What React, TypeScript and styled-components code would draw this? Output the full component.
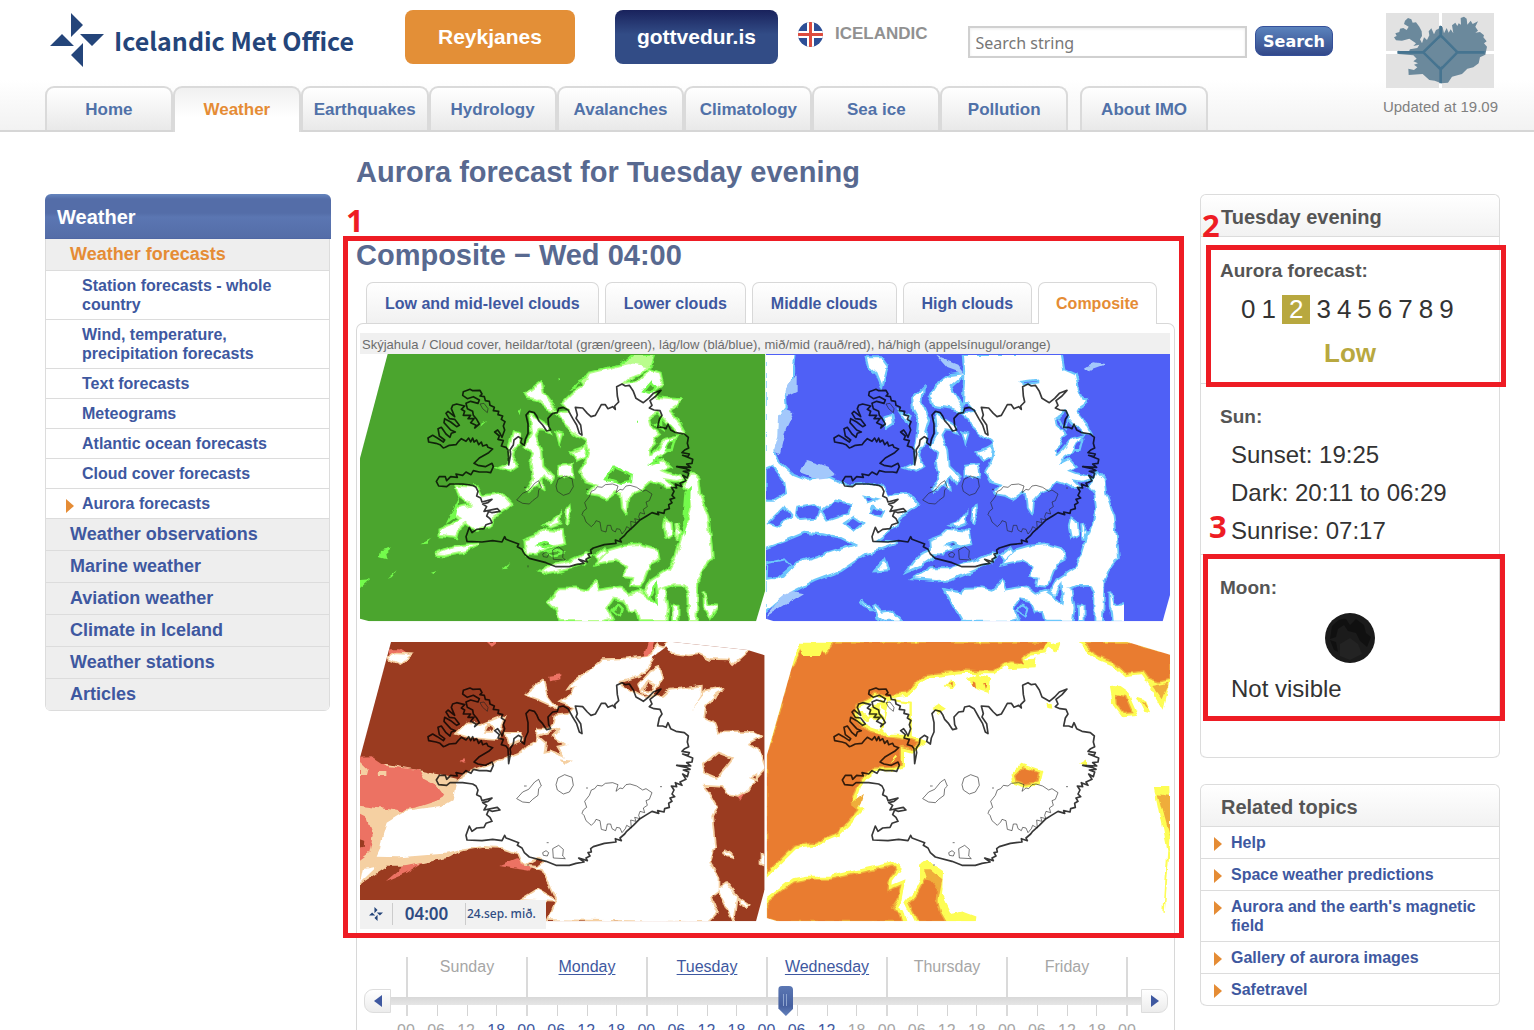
import React, { useState } from "react";
import styled, { createGlobalStyle, css } from "styled-components";

const sans = `"Liberation Sans", Arial, sans-serif`;
const line = "#dcdcdc";
const blue = "#3e58a0";
const orange = "#e58c35";
const red = "#ee1c24";

const GlobalStyle = createGlobalStyle`
  html { scrollbar-width: none; }
  body { margin: 0; background: #fff; font-family: ${sans}; color: #333; }
  *, *::before, *::after { box-sizing: border-box; }
  h1, h2, h3, p, ul, ol, dl, dd { margin: 0; padding: 0; }
  ul, ol { list-style: none; }
  a { color: inherit; text-decoration: none; }
  button { font-family: inherit; border: 0; padding: 0; cursor: pointer; }
`;

/* ---------- header ---------- */

const Header = styled.header`
  display: flex;
  justify-content: space-between;
  height: 132px;
  padding: 0 36px 0 45px;
  border-bottom: 2px solid #d6d6d6;
  background: linear-gradient(#fff 80px, #f2f2f2);
`;

const HeaderMain = styled.div`
  display: flex;
  flex-direction: column;
  flex: 0 1 1288px;
`;

const TopBar = styled.div`
  display: flex;
  flex-shrink: 0;
  align-items: flex-start;
  height: 86px;
  padding: 10px 0 0 5px;
`;

const Logo = styled.a`
  display: flex;
  align-items: center;
  gap: 10px;
  width: 300px;
  height: 60px;
  margin-right: 55px;
  white-space: nowrap;
  font: bold 25px/60px "Noto Sans CJK JP", "Open Sans", sans-serif;
  color: #24457a;
  svg { flex-shrink: 0; }
`;

const PromoLink = styled.a<{ $tone: "orange" | "navy" }>`
  display: grid;
  place-items: center;
  height: 54px;
  padding: 0 ${(p) => (p.$tone === "orange" ? 33 : 22)}px;
  margin-right: ${(p) => (p.$tone === "orange" ? 40 : 20)}px;
  border-radius: 8px;
  font-size: 21px;
  font-weight: bold;
  color: #fff;
  background: ${(p) => (p.$tone === "orange" ? "#e38f37" : "linear-gradient(#19225c, #324c86 45%)")};
`;

const Language = styled.a`
  display: flex;
  align-items: center;
  gap: 12px;
  height: 48px;
  margin-right: 40px;
  font-size: 17px;
  font-weight: bold;
  color: #919191;
`;

const SearchForm = styled.form`
  display: flex;
  align-items: flex-start;
  gap: 8px;
  flex: 1;
  padding-top: 16px;
`;

const SearchInput = styled.input`
  flex: 1;
  min-width: 0;
  height: 32px;
  padding: 2px 6px 0;
  border: 2px solid #d0d0d0;
  box-shadow: inset 0 1px 3px #ececec;
  font: 16px "Noto Sans", sans-serif;
  color: #777;
  &::placeholder { color: #777; opacity: 1; }
`;

const SearchButton = styled.button`
  width: 78px;
  height: 30px;
  border: 1px solid #35509a;
  border-radius: 8px;
  font: bold 16px "DejaVu Sans", sans-serif;
  color: #fff;
  background: linear-gradient(#5b83bd, #33498a);
`;

const Nav = styled.nav`
  display: flex;
  width: 1163px;
  max-width: 100%;
`;

const NavTab = styled.a<{ $active?: boolean; $apart?: boolean }>`
  flex: 1 1 0;
  height: 44px;
  margin-left: ${(p) => (p.$apart ? 12 : 0)}px;
  border: 2px solid #dadada;
  border-bottom: 0;
  border-radius: 9px 9px 0 0;
  text-align: center;
  font-size: 17px;
  font-weight: bold;
  line-height: 43px;
  color: #5071a8;
  background: linear-gradient(#fff, #e9e9e9);
  & + & { border-left-width: ${(p) => (p.$apart ? 2 : 0)}px; }
  ${(p) => p.$active && css`
    height: 46px;
    margin-bottom: -2px;
    color: ${orange};
    background: linear-gradient(#f0f0f0, #fff 30px);
  `}
`;

const MapWidget = styled.a`
  display: flex;
  flex-direction: column;
  align-items: center;
  gap: 9px;
  padding-top: 13px;
  font-size: 15px;
  line-height: 20px;
  white-space: nowrap;
  color: #808080;
`;

/* ---------- page ---------- */

const Page = styled.div`
  height: 100vh;
  overflow: hidden auto;
  scrollbar-width: none;
`;

const Columns = styled.div`
  display: grid;
  grid-template-columns: 286px minmax(0, 1fr) 300px;
  gap: 25px;
  align-items: start;
  padding: 0 34px 0 45px;
`;

const SideNav = styled.nav`
  margin-top: 62px;
`;

const SideTitle = styled.h2`
  height: 45px;
  padding-left: 12px;
  border-radius: 6px 6px 0 0;
  font-size: 20px;
  line-height: 46px;
  color: #fff;
  background: linear-gradient(#6585be, #546da8 5px, #546da8 19px, #5b76b2 23px, #546da8 44px, #4a62a0 45px);
`;

const SideList = styled.ul`
  margin-right: 1px;
  border: 1px solid ${line};
  border-width: 0 1px;
  border-radius: 0 0 6px 6px;
  overflow: hidden;
`;

const SideItem = styled.li<{ $sub?: boolean; $open?: boolean }>`
  position: relative;
  border-bottom: 1px solid ${line};
  padding: ${(p) => (p.$sub ? "5px 50px 5px 36px" : "5px 12px 6px 24px")};
  font-size: ${(p) => (p.$sub ? 16 : 18)}px;
  line-height: ${(p) => (p.$sub ? 19 : 20)}px;
  font-weight: bold;
  color: ${(p) => (p.$open ? orange : blue)};
  background: ${(p) => (p.$sub ? "#fff" : "#eee")};
`;

const Marker = styled.i<{ $left: number }>`
  position: absolute;
  left: ${(p) => p.$left}px;
  top: 10px;
  border: solid transparent;
  border-width: 7px 0 7px 8px;
  border-left-color: ${orange};
`;

const Main = styled.main`
  padding-top: 22px;
`;

const Title = styled.h1`
  font-size: 29px;
  line-height: 36px;
  color: #586990;
`;

const Section = styled.section`
  position: relative;
  margin-top: 47px;
`;

const Tabs = styled.div`
  display: flex;
  gap: 6px;
  padding: 9px 10px 0;
`;

const Tab = styled.button<{ $active: boolean }>`
  height: 41px;
  padding: 2px 18px 0;
  border: 1px solid #d8d8d8;
  border-bottom: 0;
  border-radius: 7px 7px 0 0;
  white-space: nowrap;
  font-size: 16px;
  font-weight: bold;
  color: ${(p) => (p.$active ? orange : blue)};
  background: ${(p) => (p.$active ? "#fff" : "linear-gradient(#fff, #f1f1f1)")};
  ${(p) => p.$active && css`
    position: relative;
    z-index: 1;
    height: 42px;
    margin-bottom: -1px;
    padding: 1px 17px 0;
  `}
`;

const MapPanel = styled.div`
  position: relative;
  padding: 9px 4px 0 3px;
  border: 1px solid #d8d8d8;
  border-bottom: 0;
  border-radius: 7px 7px 0 0;
`;

const MapCaption = styled.p`
  height: 21px;
  padding: 2px 2px 0;
  overflow: hidden;
  white-space: nowrap;
  font-size: 13px;
  line-height: 20px;
  color: #6c6c6c;
  background: #f0f0f0;
`;

const MapSvg = styled.svg`
  display: block;
  width: 100%;
  height: auto;
`;

const MapStamp = styled.div`
  position: absolute;
  left: 3px;
  bottom: 1px;
  display: flex;
  align-items: center;
  width: 186px;
  height: 29px;
  padding-bottom: 2px;
  font-family: "Noto Sans", sans-serif;
  color: #2f4c82;
  background: #f1f1f1;
  svg { margin: 0 9px; }
`;

const StampTime = styled.time`
  width: 74px;
  padding-right: 5px;
  border: solid #ccc;
  border-width: 0 1px;
  text-align: center;
  font-size: 17px;
  font-weight: 600;
  line-height: 22px;
`;

const StampDate = styled.span`
  padding-left: 1px;
  font-size: 12px;
  font-weight: 500;
`;

/* ---------- time slider ---------- */

const TimePanel = styled.div`
  padding: 27px 6px 40px 7px;
  border: 1px solid #d8d8d8;
  border-width: 0 1px;
`;

const Timeline = styled.div`
  position: relative;
`;

const DayScale = styled.ol`
  display: grid;
  grid-template-columns: repeat(6, 1fr);
  margin: 0 40px 0 42px;
  border-right: 2px solid #dadada;
`;

const Day = styled.li<{ $on: boolean }>`
  height: 59px;
  border-left: 2px solid #dadada;
  text-align: center;
  font-size: 16px;
  line-height: 20px;
  color: ${(p) => (p.$on ? blue : "#a6a6a6")};
  a { text-decoration: underline; text-underline-offset: 2px; }
`;

const Ticks = styled.div`
  display: flex;
  justify-content: space-evenly;
  margin-top: 27px;
`;

const Tick = styled.i`
  width: 1px;
  height: 12px;
  background: #d4d4d4;
`;

const Track = styled.div`
  position: absolute;
  inset: 29px 0 auto;
  display: flex;
  align-items: center;
  height: 30px;
`;

const StepButton = styled.button<{ $side: "left" | "right" }>`
  display: grid;
  place-items: center;
  width: 27px;
  height: 24px;
  border: 1px solid #ddd;
  border-radius: ${(p) => (p.$side === "left" ? "9px 0 0 9px" : "0 9px 9px 0")};
  background: linear-gradient(#fff, #ececec);
`;

const Bar = styled.div`
  flex: 1;
  display: flex;
  align-items: center;
  height: 8px;
  padding: 0 9px;
  background: linear-gradient(#d8d8d8, #e6e6e6);
`;

const thumb = css`
  appearance: none;
  width: 15px;
  height: 30px;
  border: 0;
  border-radius: 4px 4px 0 0;
  clip-path: polygon(0 0, 100% 0, 100% 75%, 50% 100%, 0 75%);
  background:
    linear-gradient(#8ea4cf, #8ea4cf) 5px 8px / 1px 12px no-repeat,
    linear-gradient(#8ea4cf, #8ea4cf) 8px 8px / 1px 12px no-repeat,
    linear-gradient(#5b77b3, #4660a0 20px, #6482bc);
`;

const TimeRange = styled.input`
  appearance: none;
  width: 100%;
  height: 30px;
  margin: 0;
  background: none;
  &::-webkit-slider-thumb { ${thumb} }
`;

const Hours = styled.ol`
  display: grid;
  grid-template-columns: repeat(25, 1fr);
  margin: 6px 26px 0 27px;
`;

const Hour = styled.li<{ $on: boolean }>`
  text-align: center;
  font-size: 16px;
  line-height: 18px;
  color: ${(p) => (p.$on ? blue : "#a6a6a6")};
`;

/* ---------- right column ---------- */

const Aside = styled.aside`
  display: flex;
  flex-direction: column;
  gap: 26px;
  padding-top: 62px;
`;

const Card = styled.section`
  border: 1px solid ${line};
  border-bottom: 0;
  border-radius: 6px;
`;

const CardTitle = styled.h2`
  height: 42px;
  padding-left: 20px;
  border-bottom: 1px solid ${line};
  border-radius: 6px 6px 0 0;
  font-size: 20px;
  line-height: 44px;
  color: #555;
  background: linear-gradient(#fff, #f2f2f2);
`;

const Block = styled.div<{ $top: number; $bottom: number }>`
  position: relative;
  padding: ${(p) => p.$top}px 19px ${(p) => p.$bottom}px;
  border-bottom: 1px solid ${line};
  &:last-child { border-radius: 0 0 6px 6px; }
`;

const BlockTitle = styled.h3`
  font-size: 19px;
  line-height: 26px;
  color: #555;
`;

const Scale = styled.ol`
  display: flex;
  gap: 6px;
  margin: 11px 0 14px;
  padding-left: 21px;
`;

const ScaleStep = styled.li<{ $on: boolean }>`
  padding: 0 ${(p) => (p.$on ? 7 : 0)}px;
  font-size: 26px;
  line-height: 29px;
  color: ${(p) => (p.$on ? "#fff" : "#333")};
  background: ${(p) => (p.$on ? "#b8a83f" : "none")};
`;

const Level = styled.p`
  text-align: center;
  font-size: 26px;
  font-weight: bold;
  line-height: 30px;
  color: #b8a83f;
`;

const Facts = styled.ul`
  padding: 6px 0 0 11px;
  font-size: 24px;
  line-height: 38px;
  white-space: nowrap;
`;

const MoonSvg = styled.svg`
  display: block;
  margin: 11px auto 0;
`;

const TopicItem = styled.li`
  position: relative;
  padding: 6px 12px 6px 30px;
  border-bottom: 1px solid ${line};
  font-size: 16px;
  font-weight: bold;
  line-height: 19px;
  color: ${blue};
  &:last-child { border-radius: 0 0 6px 6px; }
`;

/* ---------- annotations laid over the page ---------- */

const Frame = styled.div<{ $inset: string }>`
  position: absolute;
  inset: ${(p) => p.$inset};
  z-index: 2;
  border: 5px solid ${red};
  pointer-events: none;
`;

const FrameNumber = styled.span<{ $x: number; $y: number }>`
  position: absolute;
  left: ${(p) => p.$x}px;
  top: ${(p) => p.$y}px;
  z-index: 2;
  font: bold 31px/32px "Noto Sans", sans-serif;
  color: ${red};
`;

/* ---------- drawings ---------- */

const Star = ({ size }: { size: number }) => (
  <svg width={size} height={size} viewBox="0 0 54 54" fill="#24457a" aria-hidden="true">
    <path d="M21 0L33 12 21 24z M30 21H54L42 33z M33 30V54L21 42z M0 33L12 21 24 33z" />
  </svg>
);

const Flag = () => (
  <svg width="25" height="25" viewBox="0 0 25 25" aria-hidden="true">
    <clipPath id="flag"><circle cx="12.5" cy="12.5" r="12.5" /></clipPath>
    <g clipPath="url(#flag)">
      <path fill="#2d4f97" d="M0 0h25v25H0z" />
      <path fill="#fff" d="M9 0h7v25H9z M0 9h25v7H0z" />
      <path fill="#dc4b3e" d="M11 0h3v25h-3z M0 11h25v3H0z" />
    </g>
  </svg>
);

const CountryMap = () => (
  <svg width="108" height="75" viewBox="978 39 324 225" aria-hidden="true">
    <path fill="#e2e2e2" d="M978 39h159v114H978z M1146 39h156v114h-156z M978 162h159v102H978z M1146 162h156v102h-156z" />
    <path fill="#6b899c" d="M1035 62L1044 54 1054 58 1058 68 1068 67 1078 80 1085 94 1086 108 1080 118 1086 130 1092 112 1101 120 1108 106 1106 94 1114 85 1122 103 1128 90 1136 86 1140 76 1148 82 1152 100 1160 84 1166 98 1172 88 1180 100 1176 76 1186 68 1192 78 1196 70 1203 74 1202 54 1212 50 1220 56 1222 74 1232 62 1238 72 1254 64 1246 80 1254 92 1246 98 1260 96 1272 106 1270 112 1280 124 1272 130 1281 140 1276 164 1260 172 1256 190 1240 202 1222 206 1206 222 1176 230 1164 248 1144 250 1124 242 1108 240 1088 222 1046 225 1045 206 1062 210 1072 202 1062 194 1074 190 1060 184 1070 176 1060 166 1015 162 1014 152 1046 156 1050 148 1072 144 1078 134 1060 138 1068 130 1048 116 1026 122 1008 121 1002 112 1010 108 1006 100 1018 96 1020 86 1030 84 1040 90 1046 80 1032 72z" />
    <path fill="none" stroke="#467490" strokeWidth="8" d="M1142 78V250 M1142 106L1192 157 1142 208 1090 157z M1012 157H1090 M1192 157H1274" />
    <path fill="#6b899c" d="M1142 112L1186 157 1142 202 1096 157z" />
  </svg>
);

const COAST =
  "M320 136L322 125 342 118 350 122 372 121 378 132 372 138 385 140 388 152 400 154 402 166 415 172 412 182 428 184 426 194 440 198 436 208 447 215 442 228 446 240 438 262 432 250 425 240 416 246 430 258 426 268 442 272 436 288 450 292 456 300 458 345 464 312 462 300 472 285 474 270 487 260 497 266 494 278 505 286 508 268 516 250 516 222 510 195 520 184 535 188 542 198 548 212 560 225 572 243 584 240 578 228 576 205 590 190 604 188 608 175 622 172 636 180 650 205 662 225 670 250 678 255 674 225 660 205 664 195 658 172 680 174 694 190 705 200 718 196 726 182 736 164 748 164 756 176 770 170 778 178 776 168 788 156 784 138 782 110 798 102 808 108 820 106 832 124 840 145 852 152 862 158 878 145 892 130 915 121 900 138 882 152 888 166 880 174 894 180 912 182 918 196 910 208 905 232 920 232 930 236 936 222 944 240 960 248 985 252 997 262 994 280 998 294 986 300 978 308 1000 312 996 320 980 316 1010 328 1008 340 992 342 1004 352 962 350 990 356 1002 362 982 364 998 370 994 384 980 376 990 392 972 400 978 410 958 402 962 414 946 412 954 424 948 436 956 444 942 448 948 458 938 464 940 476 926 480 924 490 905 486 908 494 888 488 872 498 852 510 832 530 812 548 806 556 792 568 796 576 778 570 780 580 745 584 712 594 704 600 706 610 696 612 702 622 690 628 694 636 668 628 684 640 660 644 640 650 600 650 570 638 520 625 505 612 498 598 484 590 488 582 450 568 446 560 438 576 410 572 378 576 333 574 330 560 340 532 348 548 362 538 384 536 390 524 408 518 402 506 392 498 398 484 408 488 432 484 424 476 384 484 392 470 380 462 396 458 408 448 378 456 374 444 362 438 366 424 360 412 350 406 320 402 282 402 272 410 248 408 241 394 250 380 268 380 272 392 284 380 304 382 300 372 320 376 330 366 345 374 352 362 370 366 392 366 404 368 412 350 408 340 388 350 366 346 354 340 370 324 398 308 410 297 396 292 392 284 380 288 376 276 368 284 362 270 354 276 350 264 344 276 338 264 330 274 316 266 308 274 300 284 280 286 268 292 262 294 252 284 240 280 218 276 216 264 230 256 244 264 262 276 266 270 250 258 246 236 256 232 270 252 282 262 286 250 298 246 284 240 264 218 266 206 284 216 302 230 310 226 296 208 280 206 270 190 276 184 296 200 286 176 290 166 302 162 326 168 316 178 326 184 322 196 344 196 336 206 354 206 344 218 360 226 356 234 370 222 362 208 352 196 350 184 334 176 330 160 344 154 366 160 370 150 352 140 334 146z";

const LAKES =
  "M482 450L500 430 518 422 536 400 548 392 556 412 548 420 546 440 530 452 520 462 500 460z M600 408L606 388 626 378 648 386 652 410 640 430 622 436 604 424z M700 440L706 424 716 420 724 410 738 412 748 404 770 402 786 408 780 428 792 418 800 420 810 408 822 406 842 412 860 424 870 420 888 432 880 452 870 456 874 470 862 478 866 492 852 488 848 500 852 510 836 506 840 518 824 514 826 538 812 530 808 540 798 552 792 538 782 536 778 546 768 540 764 526 754 526 750 546 736 542 732 516 720 512 716 520 706 530 690 516 684 500 678 494 682 484 692 476 686 458z M560 612L570 606 578 612 574 622 562 620z M590 600L608 590 622 602 620 622 628 630 592 628z M372 162L384 160 396 176 394 188 380 176z M504 412h8 M690 418h6 M572 582h6 M516 646v6 M912 414h6";

const SHARED_CLOUDS =
  "M880 50L850 70 820 82 800 100 845 95 885 60 912 70 918 100 890 120 905 145 968 150 962 165 940 180 960 205 985 250 960 245 935 218 905 185 880 200 885 230 905 250 890 262 898 280 878 300 882 320 905 300 930 268 960 260 935 300 905 320 890 345 920 330 940 350 915 362 940 372 985 384 960 392 925 386 950 410 930 412 905 398 885 392 870 405 860 415 835 425 815 445 810 485 800 470 796 430 780 425 752 445 730 435 700 430 722 405 690 395 672 365 690 335 700 300 690 272 655 248 620 215 606 190 640 185 620 160 650 130 680 110 700 70 760 55 820 40z M510 130L555 98 562 130 600 182 575 175 545 150 515 145z M522 195L580 230 583 248 565 240 548 238 538 255 556 300 560 350 590 380 582 398 565 375 545 400 512 425 535 385 525 340 532 310 508 290 530 250z M472 250L490 255 488 280 470 300 466 322 486 345 460 362 430 352 455 340 460 290z M300 408L365 412 378 440 400 436 435 432 465 465 435 485 410 500 400 530 360 540 328 518 310 530 302 562 250 556 250 540 285 525 318 508 288 492 300 475 345 465 312 440z M235 612L290 590 370 582 330 602 270 614z M508 612L505 572 545 556 562 540 618 545 625 580 585 590 550 604 545 614z M600 645L640 636 690 612 705 616 680 640 640 655 580 670 555 662 570 652z M610 350L645 345 650 382 625 376 610 378z M672 300L690 290 686 318 662 330 645 308z M634 480l8 -10 2 18 -14 34z M570 524l20 -6 20 -26 -2 30 -22 8z M1005 370L1025 390 1030 430 1055 500 1062 560 1068 620 1040 655 1025 690 1020 812 1000 812 1000 740 985 705 950 705 915 720 885 742 865 726 885 690 940 655 960 620 975 570 990 530 1005 480 1000 430 985 410z M722 640L758 602 800 590 850 586 900 600 905 628 880 642 862 690 848 710 825 706 830 680 808 676 815 650 780 630z M930 510L945 520 948 552 932 560 926 530z M960 520l12 30 -8 18z M580 755L610 716 660 715 690 722 720 696 730 722 790 712 820 735 850 725 905 762 908 722 925 718 935 770 930 812 850 812 842 780 820 782 806 750 770 745 752 772 768 805 740 812 612 812 605 780z M950 770l15 0 0 42 -14 0z M1045 725L1055 765 1085 770 1062 802 1046 770z M604 248l12 4 -6 20z M550 410l8 -14 2 20z M720 618l26 -22 6 10 -26 24z";

const GREEN_PATCHES =
  "M750 388L772 350 800 362 830 374 828 396 795 402z M862 122L884 96 896 110 882 128z M885 340l18 -14 4 12z M900 222l18 -10 2 24z M770 780L786 762 800 776 792 796z M880 740L900 700 905 760z M545 585l30 -8 12 8 -22 6z M565 606l34 -8 22 10 -32 8z M928 300l14 -26 16 -4 -8 30z";

const GREEN_WISPS =
  "M75 600L108 592 88 610 92 628 70 622z M12 690L42 688 12 714z M95 690l30 -26 -12 18z M225 668l20 -6 -12 10z M440 658l26 -22 -12 20z M190 580l36 -18 -14 16z M640 120L672 92 660 116z M482 184l10 -12 -4 20z M272 520L300 460 310 440 300 500z M985 430L1005 410 1000 480 985 560 978 520z M840 212h6v6h-6z M610 82l6 6 -4 6z M380 220l14 -6 -18 16z";

const BLUE_CLOUDS =
  "M600 15L890 15 898 60 932 75 940 110 958 155 905 150 840 130 800 110 690 180 620 155 600 160 604 75z M5 15L88 15 84 50 84 90 62 125 65 175 42 205 40 260 28 300 46 340 85 375 130 392 200 385 250 410 320 402 352 415 370 442 430 432 458 465 400 500 388 530 330 575 400 578 300 612 230 660 150 690 60 735 5 782 5 690 60 680 100 640 220 602 280 585 230 560 180 550 120 545 60 570 5 590z M498 140L520 105 560 75 600 70 556 108 598 180 560 172 510 165z M448 145L475 118 472 160 492 210 480 250 458 290 466 210 450 180z M312 25L350 25 368 50 354 105 340 70 318 50z M436 660L470 615 505 600 500 625 470 645z M452 685L500 655 640 655 560 688 520 690z M292 750l26 30 -4 0z M330 765L350 785 380 782 408 812 362 812 342 798z M545 722L590 730 600 760 620 812 596 812z M362 205l20 -6 4 20 -18 12z M416 190l20 10 -4 14z M1045 770l34 -4 0 46 -30 0z M340 660l20 -28 8 26z";

const BLUE_PATCHES =
  "M5 360L28 350 60 392 66 430 30 452 5 452z M100 470L150 462 170 476 158 506 108 510 96 496z M172 486L215 452 262 462 250 492 190 512z M10 520L60 470 84 500 40 530z M240 520L270 500 300 520 270 545z M330 470L360 480 352 500 322 492z M10 640L60 628 82 650 40 685 8 684z M300 440l40 10 -30 10z";

const RED_WHITE =
  "M935 5L925 35 905 28 880 62 800 70 740 72 700 108 650 142 640 156 662 150 648 176 615 198 655 212 640 236 600 240 596 262 580 280 548 280 544 320 515 335 500 350 440 372 370 398 320 420 300 445 290 490 255 510 150 524 92 560 78 605 72 640 62 662 130 664 280 652 320 640 380 630 440 634 485 650 498 680 560 700 582 740 605 790 580 850 1055 856 1080 830 1062 785 1085 768 1085 728 1060 680 1075 632 1066 540 1080 512 1056 470 1036 446 1100 450 1120 475 1145 480 1180 460 1196 430 1226 398 1205 342 1172 322 1212 300 1192 290 1088 292 1076 262 1042 245 1048 210 1095 165 1094 156 1048 166 1002 226 1034 178 1035 152 940 164 920 182 862 186 835 172 800 152 790 136 850 118 872 98 890 66 905 45 960 50 1000 56 1030 52 1060 66 1120 68 1130 82 1175 42 1175 20z M510 176L560 136 572 180 604 222 588 208 545 188z M305 292L335 264 372 270 420 250 444 242 432 272 428 310 400 308 340 302z M448 290L495 290 494 310 458 326z M852 142L885 105 908 96 916 128 886 176 860 172z M12 740L20 700 62 692z M500 790L545 762 560 770 600 795z M1105 645l30 20 -22 -6z M1150 788l30 22 -6 6 -20 -12z M1085 760L1110 742 1140 780 1130 856 1105 800z M95 65l30 -10 35 2 -30 24z M1216 656l10 6 0 24 -10 -4z";

const RED_PATCHES =
  "M1040 386L1085 350 1130 366 1110 392 1082 425 1048 410z M545 300L612 278 590 300 628 326 605 332 622 360 584 346 566 350 570 322z M862 164L880 134 898 144 886 168z M385 290l14 -26 12 10 -6 16z M624 374l14 2 -8 4z M1185 425l16 -12 2 20z M1075 178l14 -10 -10 20z M510 686l36 -20 20 10 -20 14z";

const ORANGE_MAIN =
  "M116 34L188 52 210 18 850 18 840 42 795 48 775 62 780 84 740 76 718 82 690 104 640 104 600 102 480 116 450 148 430 168 370 178 330 168 312 190 280 205 268 236 290 268 322 286 368 300 440 314 462 322 440 338 412 330 412 384 380 394 330 396 300 420 278 450 262 500 286 520 250 560 220 590 150 620 90 630 8 710 8 360 80 108z M8 800L90 738 130 730 200 730 330 702 385 690 398 700 376 730 372 764 410 748 402 790 384 820 408 830 415 856 40 856 8 846z M434 800L462 766 482 728 500 732 524 760 520 790 530 830 545 856 462 856z M960 20L1090 18 1218 56 1218 130 1185 138 1150 126 1135 105 1085 112 1050 78 1000 58z M1058 176L1085 182 1106 230 1080 232 1060 206z M752 420L775 396 822 412 816 438 785 444 756 434z";

const ORANGE_DOTS =
  "M110 22L190 22 200 45 160 62 110 66z M548 150l14 -16 8 12 -10 14z M612 130L640 118 676 128 672 168 640 158z M1040 155L1062 152 1095 175 1108 238 1078 236 1048 200z M1122 185l20 6 16 38 -16 -4z M1175 455L1214 455 1218 600 1200 830 1212 640z M1150 140L1216 130 1195 216 1170 170z M512 216l14 -8 16 10 -16 10z M412 212l22 -2 4 30 -18 -8z M850 206l14 0 2 10 -14 -2z M950 382l14 -8 0 14z M470 690L490 676 535 706 532 780 560 836 600 828 632 840 630 856 545 856 526 800 500 735 470 740z M680 82L702 100 720 76 735 98 810 92 812 70z M850 30L885 20 876 44z";

const Outline = ({ dx = 0, dy = 0 }) => (
  <g transform={`translate(${dx} ${dy})`} fill="none" strokeLinejoin="round">
    <path d={COAST} stroke="#000" strokeOpacity=".78" strokeWidth="5" />
    <path d={LAKES} stroke="#222" strokeOpacity=".6" strokeWidth="3" />
  </g>
);

const CloudMaps = () => (
  <MapSvg viewBox="12 12 2430 1728" role="img" aria-label="Cloud cover maps: total, low, mid and high">
    <defs>
      <clipPath id="topLeft"><path d="M95 12H1228V720L1200 814H40L12 806V325z" /></clipPath>
      <clipPath id="topRight"><path d="M6 12H1218V735L1196 814H30L6 806z" /></clipPath>
      <clipPath id="lowLeft"><path d="M105 18H950L1175 42 1226 58V760L1200 856H12V365z" /></clipPath>
      <clipPath id="lowRight"><path d="M105 18H1090L1218 56V760L1200 856H40L8 846V360z" /></clipPath>
      <filter id="ragged" x="0" y="0" width="100%" height="100%" colorInterpolationFilters="sRGB">
        <feTurbulence type="fractalNoise" baseFrequency="0.03" numOctaves="2" seed="4" />
        <feDisplacementMap in="SourceGraphic" scale="18" xChannelSelector="R" yChannelSelector="G" />
      </filter>
    </defs>

    <g clipPath="url(#topLeft)">
      <path fill="#4ba52e" d="M0 0h1240v830H0z" />
      <g filter="url(#ragged)">
        <path d={SHARED_CLOUDS} fill="#74fb4c" stroke="#74fb4c" strokeWidth="11" />
        <path d="M895 15L880 60 840 60 690 120 670 90 730 60 790 44 830 15z" fill="#b9fd8d" stroke="#74fb4c" strokeWidth="6" />
        <path d={SHARED_CLOUDS} fill="#fff" stroke="#b9fd8d" strokeWidth="4" />
        <path d={GREEN_PATCHES} fill="#4ba52e" stroke="#74fb4c" strokeWidth="7" />
        <path d={GREEN_WISPS} fill="#74fb4c" />
      </g>
    </g>
    <Outline />

    <g transform="translate(1224 0)">
      <g clipPath="url(#topRight)">
        <path fill="#4f60f6" d="M0 0h1240v830H0z" />
        <g filter="url(#ragged)">
          <path d={BLUE_CLOUDS} fill="#a9cbfa" stroke="#6cc8fb" strokeWidth="13" />
          <path d="M62 125L84 90 98 70 98 125 68 140z M28 300L40 260 42 205 65 180 88 190 66 235 48 310z M110 370L130 330 190 350 215 375 170 392z M960 55l30 -18 36 6 -50 18z M520 20l60 24 20 28 -50 -18z M5 800L120 730 70 720z" fill="#a3c8fb" />
          <path d={SHARED_CLOUDS} transform="translate(-6 0)" fill="#6cc8fb" stroke="#6cc8fb" strokeWidth="11" />
          <path d={BLUE_CLOUDS} fill="#fff" />
          <path d={SHARED_CLOUDS} transform="translate(-6 0)" fill="#fff" />
          <path d="M690 172L620 160 604 60 886 60 930 150 800 140z" fill="#fff" />
          <path d={BLUE_PATCHES} fill="#4f60f6" stroke="#6cc8fb" strokeWidth="6" />
          <path d="M885 200l20 -18 10 20 -12 34z M928 300l14 -26 16 -4 -8 30z M760 780L776 762 790 776 782 796z M870 740L890 700 895 760z M545 585l30 -8 12 8 -22 6z M770 95l50 -6 0 8 -40 6z" fill="#4f60f6" stroke="#6cc8fb" strokeWidth="6" />
        </g>
      </g>
      <Outline dx={-6} />
    </g>

    <g transform="translate(0 858)">
      <g clipPath="url(#lowLeft)">
        <path fill="#9a3b20" d="M0 0h1240v860H0z" />
        <g filter="url(#ragged)">
          <path d="M0 370L190 405 300 430 300 500 255 520 160 524 92 562 78 640 130 664 320 640 280 662 150 690 90 690 0 750z" fill="#f5d0a2" stroke="#f5d0a2" strokeWidth="5" />
          <path d="M0 365L50 364 90 390 190 402 205 430 240 448 265 480 240 495 140 528 100 520 0 508z M0 530L30 545 50 600 40 650 0 680z M90 735L140 692 200 680 150 710z M430 690l50 -20 60 10 -20 24z M875 18h20l-30 90 -20 10z M390 18h36l-20 16z M580 122l36 -4 0 12 -34 6z M100 40l30 0 30 20 -60 10z M1120 70l60 -30 -50 50z M1140 478l26 -4 -14 20z M310 374l16 -4 2 10z" fill="#ec7263" />
          <path d="M12 378L35 400 30 420 12 420z M65 408h26v12H66z" fill="#f5d0a2" />
          <path d="M0 600l28 10 -2 22 -26 8z" fill="#9a3b20" />
          <path d={RED_WHITE} fill="#fff" stroke="#f5d0a2" strokeWidth="10" />
          <path d={RED_WHITE} fill="#fff" />
          <path d={RED_PATCHES} fill="#9a3b20" stroke="#f5d0a2" strokeWidth="6" />
          <path d="M890 60L930 30 945 50 920 100z" fill="#9a3b20" />
        </g>
      </g>
      <Outline dy={38} />
    </g>

    <g transform="translate(1224 858)">
      <g clipPath="url(#lowRight)">
        <g filter="url(#ragged)">
          <path d={ORANGE_DOTS} fill="#fdfd54" stroke="#fdfd54" strokeWidth="4" />
          <path d={ORANGE_MAIN} fill="#fdfd54" stroke="#fdfd54" strokeWidth="22" />
          <path d="M1184 475L1218 480 1218 600z M1165 150l48 -10 -20 50z M1132 194l12 4 10 22 -10 -6z M262 500L300 470 290 500 270 530z M480 700L500 700 535 730 524 790 520 820z" fill="#efad3b" />
          <path d={ORANGE_MAIN} fill="#e97c30" stroke="#efad3b" strokeWidth="4" />
          <path d="M372 190L440 200 440 300 370 300 350 280 362 250z M285 225l30 20 -8 8z" fill="#fff" stroke="#fdfd54" strokeWidth="7" />
          <path d="M318 212L350 200 345 230 360 250 330 256 314 240z M345 190l30 14 -8 22 -16 -10z M110 28L180 26 170 60 120 60z M375 380l20 -24 4 6z" fill="#fdfd54" />
          <path d="M626 136l8 4 2 18 -8 -8z M660 138l6 4 0 18z M555 144l8 -4 0 14z" fill="#e97c30" />
        </g>
      </g>
      <Outline dx={-6} dy={38} />
    </g>
  </MapSvg>
);

const Moon = () => (
  <MoonSvg width="52" height="52" viewBox="0 0 52 52" role="img" aria-label="New moon">
    <circle cx="26" cy="26" r="25" fill="#1b1b1b" />
    <path fill="#0c0c0c" opacity=".7" d="M8 14q8-9 14-7l4 6 6-6 8 6 2 8 5 4-4 10-7-6-4-8-8-2-4-6-6 4-2 8-6 2z M6 28l6 2 2 10-4-2z" />
    <path fill="#262626" opacity=".7" d="M16 32l10-6 8 6 4 10-12 6-10-4z" />
  </MoonSvg>
);

/* ---------- data ---------- */

const sections = ["Home", "Weather", "Earthquakes", "Hydrology", "Avalanches", "Climatology", "Sea ice", "Pollution", "About IMO"];
const forecasts = [
  "Station forecasts - whole country",
  "Wind, temperature, precipitation forecasts",
  "Text forecasts",
  "Meteograms",
  "Atlantic ocean forecasts",
  "Cloud cover forecasts",
  "Aurora forecasts",
];
const weatherLinks = ["Weather observations", "Marine weather", "Aviation weather", "Climate in Iceland", "Weather stations", "Articles"];
const cloudTabs = ["Low and mid-level clouds", "Lower clouds", "Middle clouds", "High clouds", "Composite"];
const days = ["Sunday", "Monday", "Tuesday", "Wednesday", "Thursday", "Friday"];
const topics = ["Help", "Space weather predictions", "Aurora and the earth's magnetic field", "Gallery of aurora images", "Safetravel"];

export default function App() {
  const [tab, setTab] = useState("Composite");
  const [hour, setHour] = useState(76);

  return (
    <Page>
      <GlobalStyle />
      <Header>
        <HeaderMain>
          <TopBar>
            <Logo href="#"><Star size={54} />Icelandic Met Office</Logo>
            <PromoLink href="#" $tone="orange">Reykjanes</PromoLink>
            <PromoLink href="#" $tone="navy">gottvedur.is</PromoLink>
            <Language href="#"><Flag />ICELANDIC</Language>
            <SearchForm onSubmit={(e) => e.preventDefault()}>
              <SearchInput aria-label="Search string" placeholder="Search string" />
              <SearchButton>Search</SearchButton>
            </SearchForm>
          </TopBar>
          <Nav>
            {sections.map((name) => (
              <NavTab key={name} href="#" $active={name === "Weather"} $apart={name === "About IMO"}>{name}</NavTab>
            ))}
          </Nav>
        </HeaderMain>
        <MapWidget href="#"><CountryMap />Updated at 19.09</MapWidget>
      </Header>

      <Columns>
        <SideNav>
          <SideTitle>Weather</SideTitle>
          <SideList>
            <SideItem $open><a href="#">Weather forecasts</a></SideItem>
            {forecasts.map((name) => (
              <SideItem key={name} $sub>
                {name === "Aurora forecasts" && <Marker $left={20} />}
                <a href="#">{name}</a>
              </SideItem>
            ))}
            {weatherLinks.map((name) => (
              <SideItem key={name}><a href="#">{name}</a></SideItem>
            ))}
          </SideList>
        </SideNav>

        <Main>
          <Title>Aurora forecast for Tuesday evening</Title>
          <Section>
            <Title as="h2">Composite − Wed 04:00</Title>
            <Tabs>
              {cloudTabs.map((name) => (
                <Tab key={name} $active={name === tab} onClick={() => setTab(name)}>{name}</Tab>
              ))}
            </Tabs>
            <MapPanel>
              <MapCaption>Skýjahula / Cloud cover, heildar/total (græn/green), lág/low (blá/blue), mið/mid (rauð/red), há/high (appelsínugul/orange)</MapCaption>
              <CloudMaps />
              <MapStamp>
                <Star size={14} />
                <StampTime>04:00</StampTime>
                <StampDate>24.sep. mið.</StampDate>
              </MapStamp>
            </MapPanel>
            <Frame $inset="-1px -9px -8px -13px" />
            <FrameNumber $x={-10} $y={-33}>1</FrameNumber>
          </Section>
          <TimePanel>
            <Timeline>
              <DayScale>
                {days.map((name, i) => {
                  const on = i > 0 && i < 4;
                  return (
                    <Day key={name} $on={on}>
                      {on ? <a href="#">{name}</a> : name}
                      <Ticks><Tick /><Tick /><Tick /></Ticks>
                    </Day>
                  );
                })}
              </DayScale>
              <Track>
                <StepButton $side="left" aria-label="Previous hour" onClick={() => setHour(hour - 1)}>
                  <svg width="8" height="12" viewBox="0 0 8 12" fill={blue}><path d="M8 0v12L0 6z" /></svg>
                </StepButton>
                <Bar>
                  <TimeRange type="range" aria-label="Forecast hour" min={0} max={144} value={hour} onChange={(e) => setHour(Number(e.target.value))} />
                </Bar>
                <StepButton $side="right" aria-label="Next hour" onClick={() => setHour(hour + 1)}>
                  <svg width="8" height="12" viewBox="0 0 8 12" fill={blue}><path d="M0 0v12L8 6z" /></svg>
                </StepButton>
              </Track>
            </Timeline>
            <Hours>
              {Array.from({ length: 25 }, (_, i) => (
                <Hour key={i} $on={i > 2 && i < 15}>{String((i % 4) * 6).padStart(2, "0")}</Hour>
              ))}
            </Hours>
          </TimePanel>
        </Main>

        <Aside>
          <Card>
            <CardTitle>Tuesday evening</CardTitle>
            <Block $top={21} $bottom={15}>
              <BlockTitle>Aurora forecast:</BlockTitle>
              <Scale>
                {Array.from({ length: 10 }, (_, n) => <ScaleStep key={n} $on={n === 2}>{n}</ScaleStep>)}
              </Scale>
              <Level>Low</Level>
              <Frame $inset="8px -7px -4px 5px" />
              <FrameNumber $x={1} $y={-28}>2</FrameNumber>
            </Block>
            <Block $top={20} $bottom={4}>
              <BlockTitle>Sun:</BlockTitle>
              <Facts>
                <li>Sunset: 19:25</li>
                <li>Dark: 20:11 to 06:29</li>
                <li>Sunrise: 07:17</li>
              </Facts>
            </Block>
            <Block $top={20} $bottom={49}>
              <BlockTitle>Moon:</BlockTitle>
              <Moon />
              <Facts><li>Not visible</li></Facts>
              <Frame $inset="-1px -6px 36px 2px" />
              <FrameNumber $x={8} $y={-45}>3</FrameNumber>
            </Block>
          </Card>
          <Card>
            <CardTitle>Related topics</CardTitle>
            <ul>
              {topics.map((name) => (
                <TopicItem key={name}><Marker $left={13} /><a href="#">{name}</a></TopicItem>
              ))}
            </ul>
          </Card>
        </Aside>
      </Columns>
    </Page>
  );
}
